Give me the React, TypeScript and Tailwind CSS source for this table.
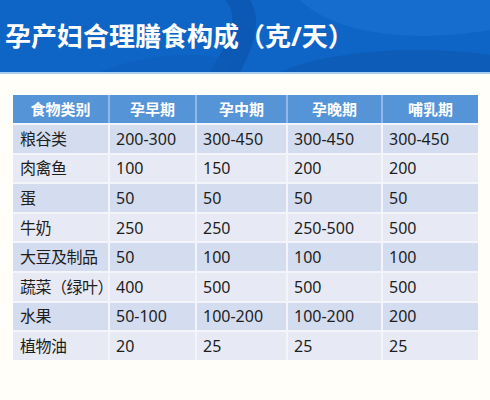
import React from "react";

const rows: string[][] = [
  ["粮谷类", "200-300", "300-450", "300-450", "300-450"],
  ["肉禽鱼", "100", "150", "200", "200"],
  ["蛋", "50", "50", "50", "50"],
  ["牛奶", "250", "250", "250-500", "500"],
  ["大豆及制品", "50", "100", "100", "100"],
  ["蔬菜（绿叶）", "400", "500", "500", "500"],
  ["水果", "50-100", "100-200", "100-200", "200"],
  ["植物油", "20", "25", "25", "25"],
];

const heads = ["食物类别", "孕早期", "孕中期", "孕晚期", "哺乳期"];

export default function App() {
  return (
    <div
      className="w-[490px] h-[400px] bg-[#fffef8] overflow-hidden"
      style={{ fontFamily: '"Noto Sans", "Noto Sans CJK SC", sans-serif' }}
    >
      <div className="relative h-[72px] bg-[#0f65c6] overflow-hidden">
        <svg className="absolute inset-0" width="490" height="72" viewBox="0 0 490 72">
          <path d="M210 72 C 230 40, 240 15, 225 0 L 250 0 C 262 20, 255 45, 240 72 Z" fill="#0a56b0" opacity="0.8" />
          <path d="M300 0 C 330 30, 400 45, 490 30 L 490 0 Z" fill="#1a73d2" opacity="0.6" />
          <path d="M280 72 C 330 50, 420 45, 490 55 L 490 72 Z" fill="#0b58b2" opacity="0.7" />
          <path d="M100 72 C 140 55, 190 50, 230 60 L 230 72 Z" fill="#0c5cb8" opacity="0.5" />
        </svg>
        <div className="relative pl-[5px] pt-[19px] text-white font-bold text-[26px] leading-[34px]">
          孕产妇合理膳食构成（克/天）
        </div>
      </div>
      <div className="h-[2px] bg-[#a9cdef]" />
      <div className="ml-[13px] mt-[21px] w-[465px] grid grid-cols-[97px_87px_91px_95px_95px]">
        {heads.map((h, i) => (
          <div
            key={h}
            className={`h-[28px] bg-[#5694d8] text-white font-bold text-[15px] flex items-center justify-center ${i < 4 ? "border-r-2 border-[#8fb8e6]" : ""}`}
          >
            {h}
          </div>
        ))}
        {rows.map((r, ri) =>
          r.map((c, ci) => (
            <div
              key={`${ri}-${ci}`}
              className={`h-[29.6px] flex items-center text-[16px] text-[#1e1e1e] border-t-2 border-[#f4f5fb] ${ci === 0 ? "pl-[7px] tracking-[-0.5px]" : "pl-[6px]"} ${ci < 4 ? "border-r-2 border-r-[#f4f5fb]" : ""} ${ri % 2 === 0 ? "bg-[#d4dcef]" : "bg-[#e7eaf4]"}`}
            >
              {c}
            </div>
          ))
        )}
      </div>
    </div>
  );
}
